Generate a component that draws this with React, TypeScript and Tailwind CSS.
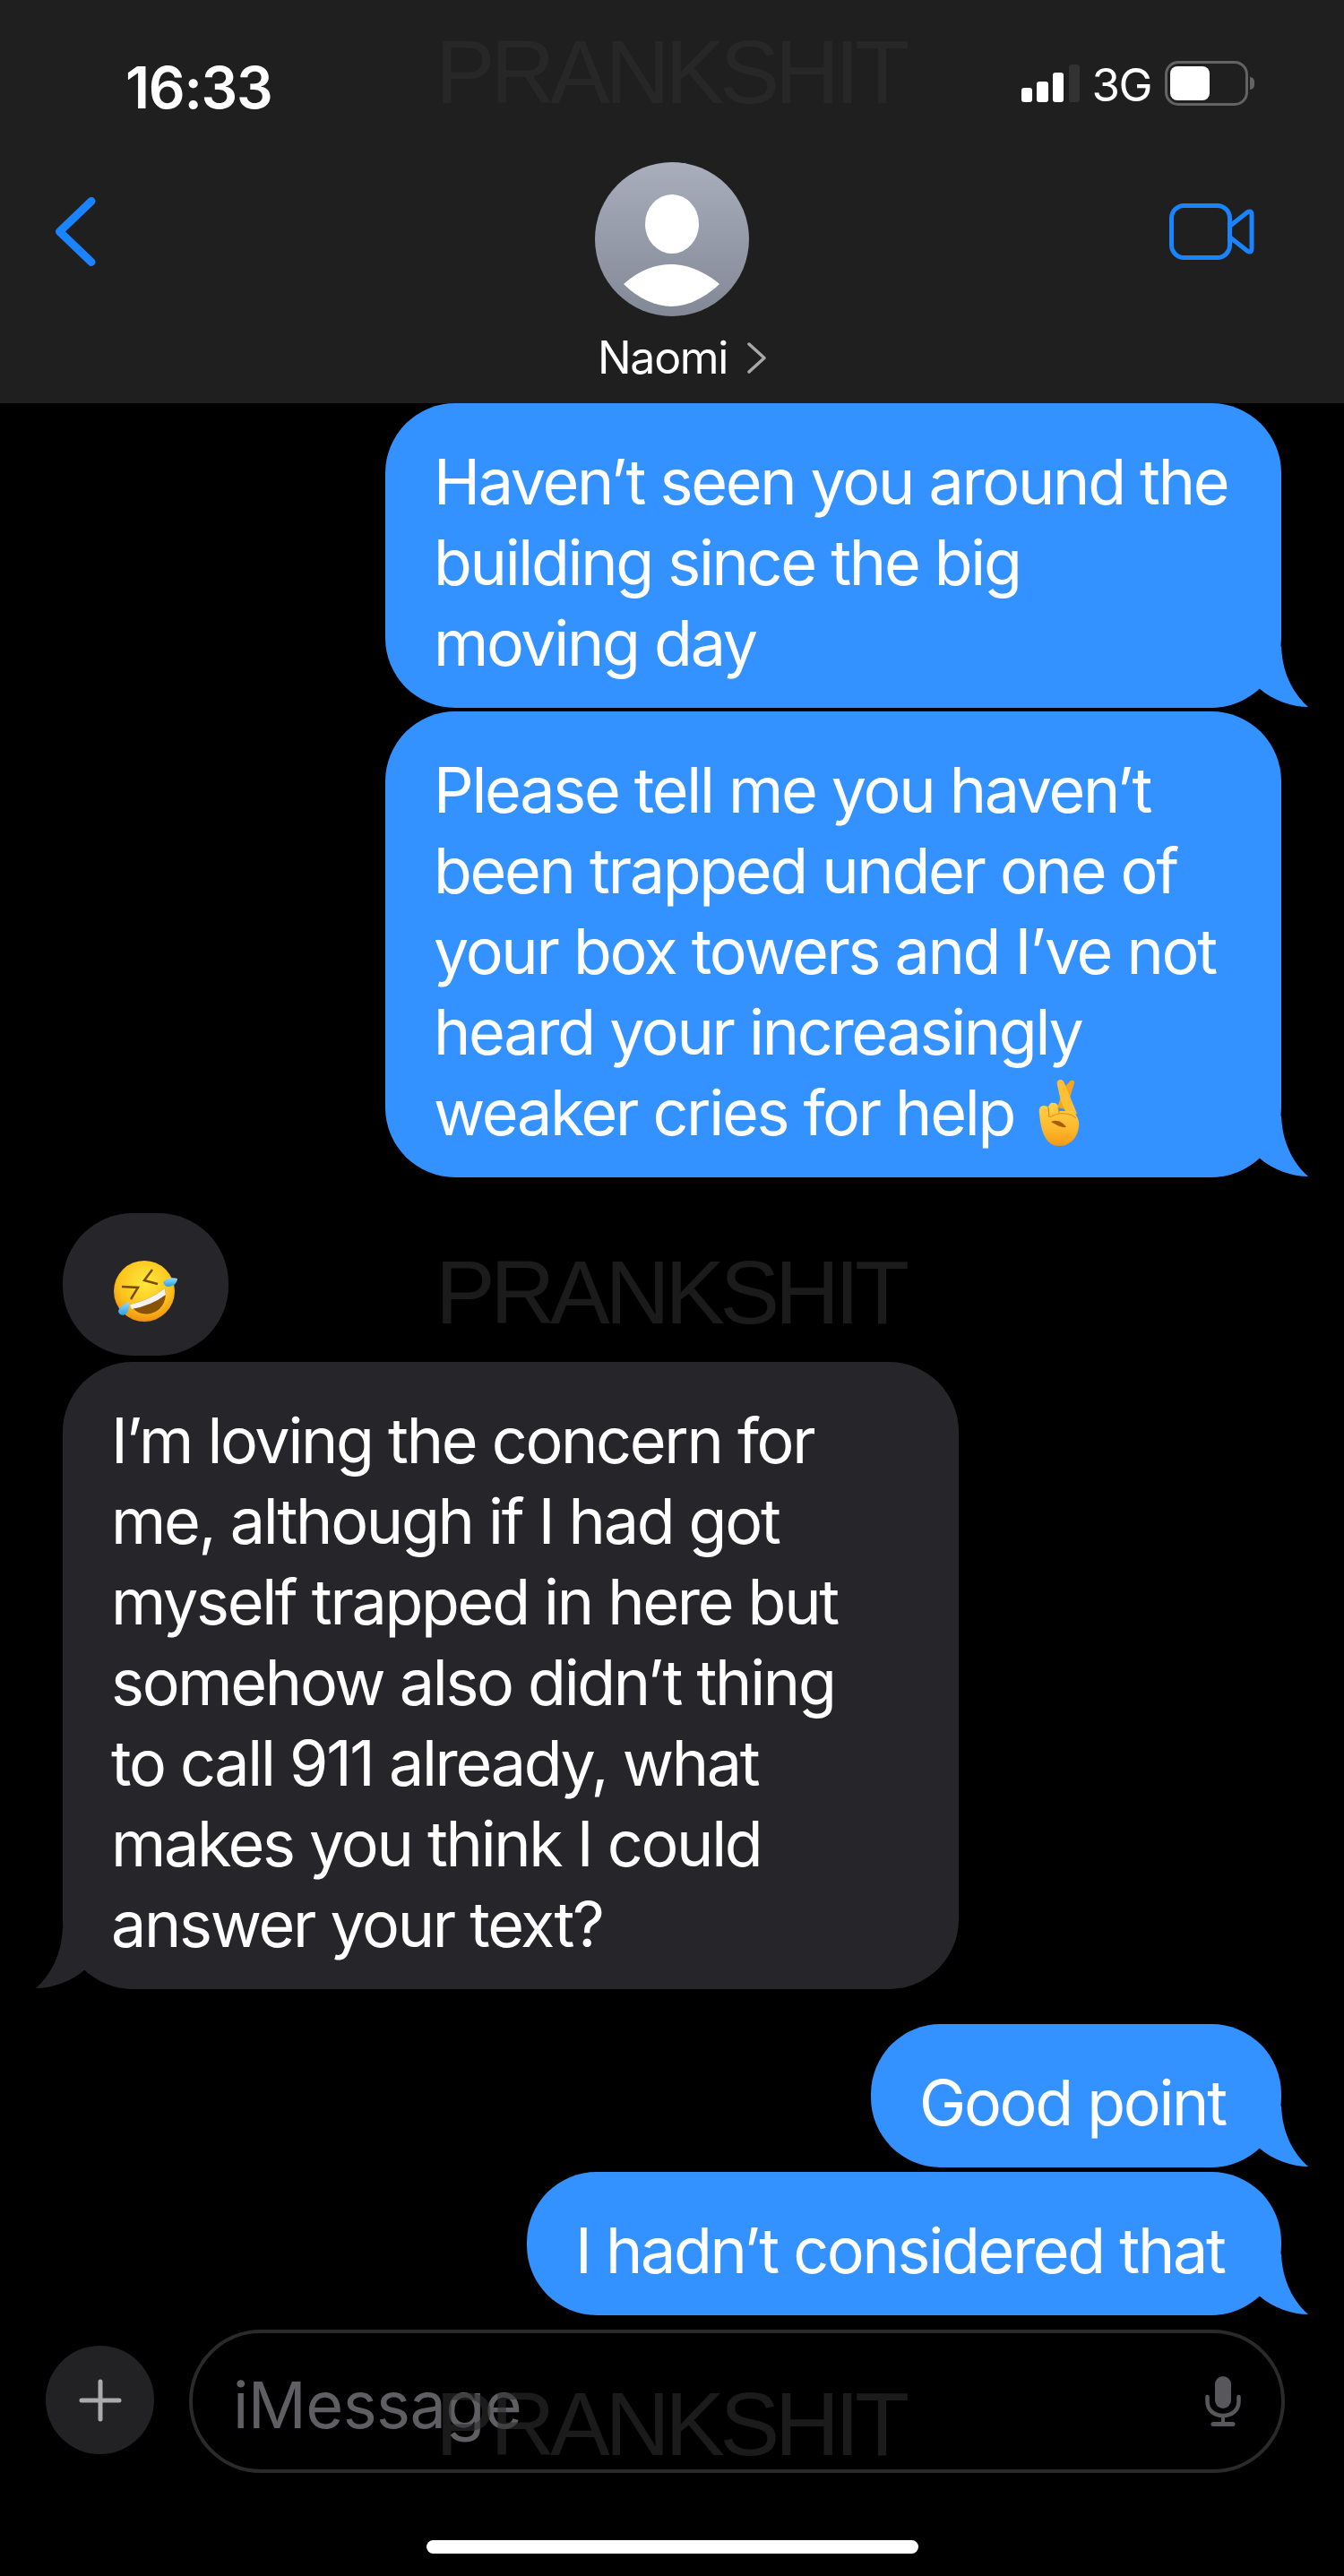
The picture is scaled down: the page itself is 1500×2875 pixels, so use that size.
import type { ReactNode } from "react";

const FONT = "font-['Inter','Liberation_Sans',sans-serif]";

function Tail({ fill, flip }: { fill: string; flip?: boolean }) {
  return (
    <svg
      viewBox="0 0 120 84"
      className={`absolute bottom-0 h-[84px] w-[120px] ${flip ? "left-[-30px] -scale-x-100" : "right-[-30px]"}`}
    >
      <path
        d="M90 15C91 45 103 68 120 83C102 83 81 76 65 62C50 75 32 84 8 84L60 40Z"
        fill={fill}
      />
    </svg>
  );
}

function CrossedFingers() {
  return (
    <svg viewBox="0 0 47 74" className="ml-[26px] inline-block h-[74px] w-[47px] align-[-12px]">
      <defs>
        <linearGradient id="hand" x1="0" y1="0" x2="0" y2="1">
          <stop offset="0" stopColor="#ffd24a" />
          <stop offset="0.6" stopColor="#fdb82c" />
          <stop offset="1" stopColor="#f59a16" />
        </linearGradient>
      </defs>
      <path d="M30 8L37 1C39 0 42 1 41 4L32 33L22 31Z" fill="#f3a51f" />
      <path d="M22 6C21 2 23 0 26 0C28 0 29 2 30 4L44 38L34 42L26 24Z" fill="#fdbf33" />
      <path
        d="M2 38C1 31 4 29 7 29C10 29 11 30 12 31C13 27 15 25 18 26C21 26 23 28 23 31L24 35L38 35C43 38 47 44 46 52C45 65 36 74 24 74C11 74 4 62 2 38Z"
        fill="url(#hand)"
      />
      <path d="M12 31L13 42M23 31L24 37" stroke="#d98a17" strokeWidth="1.200" fill="none" />
      <path d="M14 42C22 36 36 36 43 43" stroke="#e69a1c" strokeWidth="1.200" fill="none" />
      <path d="M15 47C21 44 28 47 32 53C26 54 20 50 15 47Z" fill="#a85e0c" />
    </svg>
  );
}

function RoflEmoji() {
  return (
    <svg viewBox="0 0 71 68" className="h-[68px] w-[71px]">
      <defs>
        <radialGradient id="face" cx="0.52" cy="0.35" r="0.68">
          <stop offset="0" stopColor="#ffe93d" />
          <stop offset="0.65" stopColor="#fcc21b" />
          <stop offset="1" stopColor="#ef8a10" />
        </radialGradient>
        <linearGradient id="drop" x1="0" y1="0" x2="0" y2="1">
          <stop offset="0" stopColor="#8fdcff" />
          <stop offset="1" stopColor="#2f9ee0" />
        </linearGradient>
      </defs>
      <circle cx="34" cy="34" r="34" fill="url(#face)" />
      <path d="M18 49Q40 44 57 31C60 42 55 54 44 58C33 62 24 58 18 49Z" fill="#8a5206" />
      <path d="M18 49Q40 44 57 31L58 38Q42 50 20 54Z" fill="#f3f3f3" />
      <path d="M43 10L34 22L49 26" stroke="#7c4a03" strokeWidth="2.500" fill="none" />
      <path d="M9 29L27 30L19 43" stroke="#7c4a03" strokeWidth="2.500" fill="none" />
      <path d="M55 24C58 20 65 18 71 20C71 25 66 29 61 29C58 29 56 27 55 24Z" fill="url(#drop)" />
      <path d="M17 46C17 51 17 56 14 59C11 62 6 61 5 57C5 53 11 48 17 46Z" fill="url(#drop)" />
    </svg>
  );
}

function Bubble({ children, sent, width }: { children: ReactNode; sent?: boolean; width: string }) {
  return (
    <div
      className={`relative ${width} rounded-[78px] px-[54px] pt-[43px] pb-[27px] text-[70px] leading-[90px] tracking-[-2.3px] whitespace-nowrap text-white ${
        sent ? "bg-[#3392ff]" : "bg-[#26262a]"
      }`}
    >
      <Tail fill={sent ? "#3392ff" : "#26262a"} flip={!sent} />
      <div className="relative">{children}</div>
    </div>
  );
}

function Watermark({ top }: { top: string }) {
  return (
    <div
      className={`pointer-events-none absolute left-[486px] ${top} font-['Liberation_Sans',sans-serif] text-[100px] leading-[100px] tracking-[-5.4px] text-[#2d2d2d]/60`}
    >
      PRANKSHIT
    </div>
  );
}

export default function App() {
  return (
    <div className={`relative flex h-[2875px] w-[1500px] flex-col overflow-hidden bg-black ${FONT}`}>
      {/* Header */}
      <div className="h-[450px] shrink-0 bg-[#1f1f1f]">
        <div className="flex h-[181px] items-start justify-between pr-[107px] pl-[140px]">
          <span className="mt-[60px] text-[64px] leading-[75px] font-semibold tracking-[-1.3px] text-white">16:33</span>
          <div className="mt-[65px] flex items-center">
            <svg viewBox="0 0 65 42" className="h-[42px] w-[65px]">
              <rect x="0" y="26" width="12" height="16" rx="3" fill="#fff" />
              <rect x="17" y="19" width="13" height="23" rx="3" fill="#fff" />
              <rect x="35" y="9" width="12" height="33" rx="3" fill="#fff" />
              <rect x="53" y="0" width="12" height="42" rx="3" fill="#323232" />
            </svg>
            <span className="mt-[5px] ml-[13px] text-[51px] leading-[50px] tracking-[-1.5px] text-white">3G</span>
            <div className="relative ml-[15px] h-[50px] w-[93px] rounded-[15px] border-[3px] border-[#636363] p-[3px]">
              <div className="h-full w-[44px] rounded-[8px] bg-white" />
              <div className="absolute top-[15px] right-[-10px] h-[14px] w-[5px] rounded-r-full bg-[#636363]" />
            </div>
          </div>
        </div>
        <div className="grid grid-cols-[1fr_auto_1fr] items-start px-[62px]">
          <svg viewBox="0 0 45 77" className="mt-[39px] h-[77px] w-[45px] justify-self-start" fill="none">
            <path d="M40 4.500L4.500 38.500L40 72.500" stroke="#1a84ff" strokeWidth="9" strokeLinecap="round" strokeLinejoin="round" />
          </svg>
          <div className="flex flex-col items-center">
            <svg viewBox="0 0 172 172" className="h-[172px] w-[172px]">
              <defs>
                <linearGradient id="avatar" x1="0" y1="0" x2="0" y2="1">
                  <stop offset="0" stopColor="#a8aebc" />
                  <stop offset="1" stopColor="#838896" />
                </linearGradient>
              </defs>
              <circle cx="86" cy="86" r="86" fill="url(#avatar)" />
              <ellipse cx="86" cy="69" rx="30" ry="33" fill="#fff" />
              <path d="M32 136C50 120 68 114 85 114C103 114 122 122 139 136C122 152 103 161 85 161C68 161 48 152 32 136Z" fill="#fff" />
            </svg>
            <div className="mt-[18px] flex w-[172px] items-center pl-[3px] text-white">
              <span className="text-[50px] leading-[57px] tracking-[-1.3px]">Naomi</span>
              <svg viewBox="0 0 21 35" className="ml-[22px] h-[35px] w-[21px] shrink-0" fill="none">
                <path d="M2 2L19 17.500L2 33" stroke="#a8a8a8" strokeWidth="3.500" strokeLinecap="round" strokeLinejoin="round" />
              </svg>
            </div>
          </div>
          <svg viewBox="0 0 95 63" className="mt-[46px] mr-[38px] h-[63px] w-[95px] justify-self-end" fill="none" stroke="#1a84ff" strokeWidth="5">
            <rect x="2.500" y="2.500" width="65" height="58" rx="14" />
            <path d="M68 25L87 10Q92 7 92 13V50Q92 56 87 53L68 38" strokeLinejoin="round" />
          </svg>
        </div>
      </div>

      {/* Messages */}
      <div className="flex flex-col">
        <div className="flex flex-col items-end gap-[4px] pr-[70px]">
          <Bubble sent width="w-[1000px]">
            Haven’t seen you around the
            <br />
            building since the big
            <br />
            moving day
          </Bubble>
          <Bubble sent width="w-[1000px]">
            Please tell me you haven’t
            <br />
            been trapped under one of
            <br />
            your box towers and I’ve not
            <br />
            heard your increasingly
            <br />
            weaker cries for help
            <CrossedFingers />
          </Bubble>
        </div>
        <div className="mt-[40px] flex flex-col items-start gap-[7px] pl-[70px]">
          <div className="flex h-[159px] w-[185px] items-center justify-center rounded-[78px] bg-[#26262a] pt-[15px]">
            <RoflEmoji />
          </div>
          <Bubble width="w-[1000px]">
            I’m loving the concern for
            <br />
            me, although if I had got
            <br />
            myself trapped in here but
            <br />
            somehow also didn’t thing
            <br />
            to call 911 already, what
            <br />
            makes you think I could
            <br />
            answer your text?
          </Bubble>
        </div>
        <div className="mt-[39px] flex flex-col items-end gap-[5px] pr-[70px]">
          <Bubble sent width="w-[458px]">
            Good point
          </Bubble>
          <Bubble sent width="w-[842px]">
            I hadn’t considered that
          </Bubble>
        </div>
      </div>

      {/* Input */}
      <div className="mt-[16px] flex items-center gap-[39px] pr-[66px] pl-[51px]">
        <div className="mb-[3px] flex h-[121px] w-[121px] shrink-0 items-center justify-center rounded-full bg-[#222224]">
          <svg viewBox="0 0 48 48" className="h-[48px] w-[48px]" stroke="#aaaaaa" strokeWidth="5" strokeLinecap="round">
            <path d="M24 3V45M3 24H45" />
          </svg>
        </div>
        <div className="flex h-[160px] flex-1 items-center justify-between rounded-full border-[4px] border-[#2a2a2a] pr-[45px] pl-[45px]">
          <span className="mt-[8px] text-[72px] leading-[80px] tracking-[-0.6px] text-[#5f5f63]">iMessage</span>
          <svg viewBox="0 0 41 57" className="h-[57px] w-[41px]" fill="none" stroke="#58585c">
            <rect x="12" y="0" width="18" height="36" rx="9" fill="#58585c" stroke="none" />
            <path d="M3.500 23V28C3.500 38 11 44 21 44C31 44 38.500 38 38.500 28V23" strokeWidth="4.500" strokeLinecap="round" />
            <path d="M21 44V53" strokeWidth="4" />
            <path d="M10 53.500H32" strokeWidth="5" strokeLinecap="round" />
          </svg>
        </div>
      </div>

      {/* Home indicator */}
      <div className="mt-[75px] flex justify-center">
        <div className="h-[15px] w-[549px] rounded-full bg-white" />
      </div>

      <Watermark top="top-[30px]" />
      <Watermark top="top-[1392px]" />
      <Watermark top="top-[2655px]" />
    </div>
  );
}
